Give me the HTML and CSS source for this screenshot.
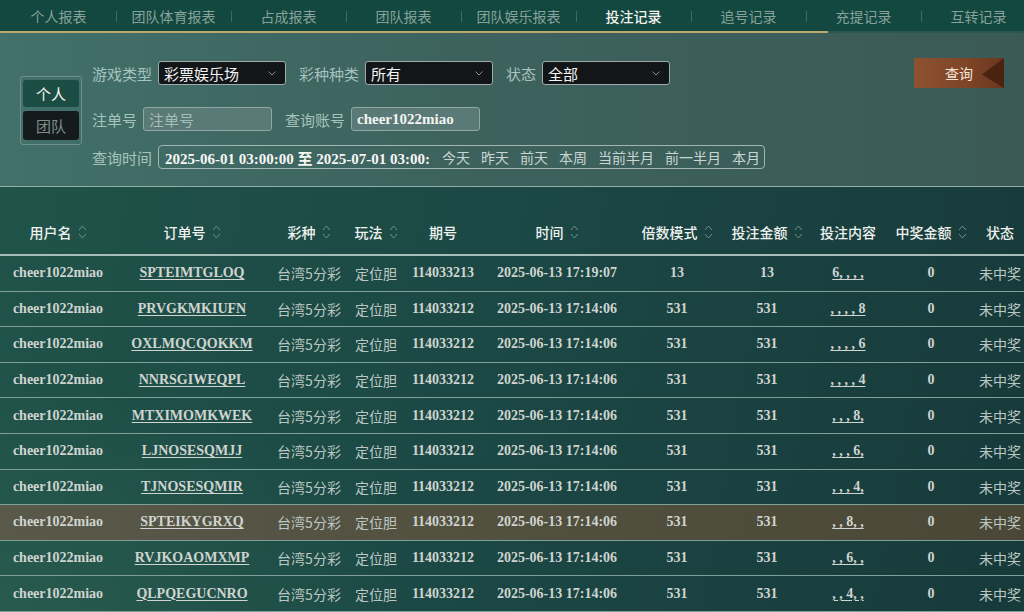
FILE: index.html
```html
<!DOCTYPE html>
<html lang="zh-CN">
<head>
<meta charset="utf-8">
<title>投注记录</title>
<link rel="stylesheet" href="styles.css">
</head>
<body>
<div class="page">
  <nav class="tabs">
    <div class="tab">个人报表</div>
    <div class="tab sep">团队体育报表</div>
    <div class="tab sep">占成报表</div>
    <div class="tab sep">团队报表</div>
    <div class="tab sep">团队娱乐报表</div>
    <div class="tab sep active">投注记录</div>
    <div class="tab sep">追号记录</div>
    <div class="tab sep">充提记录</div>
    <div class="tab sep">互转记录</div>
  </nav>
  <div class="tabline"><div class="tabline-gold"></div></div>

  <section class="filters">
    <div class="scope">
      <div class="scope-btn on">个人</div>
      <div class="scope-btn off">团队</div>
    </div>
    <div class="form">
      <div class="frow r1">
        <label class="lbl">游戏类型</label>
        <div class="select"><span>彩票娱乐场</span><svg class="chev" width="8" height="5" viewBox="0 0 8 5"><path d="M0.5 0.5 L4 4 L7.5 0.5" fill="none" stroke="#8a8f92" stroke-width="1"/></svg></div>
        <label class="lbl gap">彩种种类</label>
        <div class="select"><span>所有</span><svg class="chev" width="8" height="5" viewBox="0 0 8 5"><path d="M0.5 0.5 L4 4 L7.5 0.5" fill="none" stroke="#8a8f92" stroke-width="1"/></svg></div>
        <label class="lbl gap">状态</label>
        <div class="select"><span>全部</span><svg class="chev" width="8" height="5" viewBox="0 0 8 5"><path d="M0.5 0.5 L4 4 L7.5 0.5" fill="none" stroke="#8a8f92" stroke-width="1"/></svg></div>
      </div>
      <div class="frow r2">
        <label class="lbl">注单号</label>
        <div class="input placeholder">注单号</div>
        <label class="lbl gap">查询账号</label>
        <div class="input value">cheer1022miao</div>
      </div>
      <div class="frow r3">
        <label class="lbl">查询时间</label>
        <div class="daterange">
          <span class="dates">2025-06-01 03:00:00 至 2025-07-01 03:00:00</span>
          <span class="quick">今天</span>
          <span class="quick">昨天</span>
          <span class="quick">前天</span>
          <span class="quick">本周</span>
          <span class="quick">当前半月</span>
          <span class="quick">前一半月</span>
          <span class="quick">本月</span>
        </div>
      </div>
    </div>
    <div class="search-btn">查询</div>
  </section>

  <section class="table">
    <div class="thead">
      <div class="th">用户名<svg class="sort" width="9" height="16" viewBox="0 0 9 16"><path d="M1 6 L4.5 2 L8 6 M1 10 L4.5 14 L8 10" fill="none" stroke="#6f908a" stroke-width="1"/></svg></div>
      <div class="th">订单号<svg class="sort" width="9" height="16" viewBox="0 0 9 16"><path d="M1 6 L4.5 2 L8 6 M1 10 L4.5 14 L8 10" fill="none" stroke="#6f908a" stroke-width="1"/></svg></div>
      <div class="th">彩种<svg class="sort" width="9" height="16" viewBox="0 0 9 16"><path d="M1 6 L4.5 2 L8 6 M1 10 L4.5 14 L8 10" fill="none" stroke="#6f908a" stroke-width="1"/></svg></div>
      <div class="th">玩法<svg class="sort" width="9" height="16" viewBox="0 0 9 16"><path d="M1 6 L4.5 2 L8 6 M1 10 L4.5 14 L8 10" fill="none" stroke="#6f908a" stroke-width="1"/></svg></div>
      <div class="th">期号</div>
      <div class="th">时间<svg class="sort" width="9" height="16" viewBox="0 0 9 16"><path d="M1 6 L4.5 2 L8 6 M1 10 L4.5 14 L8 10" fill="none" stroke="#6f908a" stroke-width="1"/></svg></div>
      <div class="th">倍数模式<svg class="sort" width="9" height="16" viewBox="0 0 9 16"><path d="M1 6 L4.5 2 L8 6 M1 10 L4.5 14 L8 10" fill="none" stroke="#6f908a" stroke-width="1"/></svg></div>
      <div class="th">投注金额<svg class="sort" width="9" height="16" viewBox="0 0 9 16"><path d="M1 6 L4.5 2 L8 6 M1 10 L4.5 14 L8 10" fill="none" stroke="#6f908a" stroke-width="1"/></svg></div>
      <div class="th">投注内容</div>
      <div class="th">中奖金额<svg class="sort" width="9" height="16" viewBox="0 0 9 16"><path d="M1 6 L4.5 2 L8 6 M1 10 L4.5 14 L8 10" fill="none" stroke="#6f908a" stroke-width="1"/></svg></div>
      <div class="th">状态</div>
    </div>

    <div class="tr">
      <div class="td num">cheer1022miao</div><div class="td num link">SPTEIMTGLOQ</div><div class="td cn">台湾5分彩</div><div class="td cn">定位胆</div><div class="td num">114033213</div><div class="td num">2025-06-13 17:19:07</div><div class="td num">13</div><div class="td num">13</div><div class="td num link bet">6, , , ,</div><div class="td num">0</div><div class="td cn">未中奖</div>
    </div>
    <div class="tr">
      <div class="td num">cheer1022miao</div><div class="td num link">PRVGKMKIUFN</div><div class="td cn">台湾5分彩</div><div class="td cn">定位胆</div><div class="td num">114033212</div><div class="td num">2025-06-13 17:14:06</div><div class="td num">531</div><div class="td num">531</div><div class="td num link bet">, , , , 8</div><div class="td num">0</div><div class="td cn">未中奖</div>
    </div>
    <div class="tr">
      <div class="td num">cheer1022miao</div><div class="td num link">OXLMQCQOKKM</div><div class="td cn">台湾5分彩</div><div class="td cn">定位胆</div><div class="td num">114033212</div><div class="td num">2025-06-13 17:14:06</div><div class="td num">531</div><div class="td num">531</div><div class="td num link bet">, , , , 6</div><div class="td num">0</div><div class="td cn">未中奖</div>
    </div>
    <div class="tr">
      <div class="td num">cheer1022miao</div><div class="td num link">NNRSGIWEQPL</div><div class="td cn">台湾5分彩</div><div class="td cn">定位胆</div><div class="td num">114033212</div><div class="td num">2025-06-13 17:14:06</div><div class="td num">531</div><div class="td num">531</div><div class="td num link bet">, , , , 4</div><div class="td num">0</div><div class="td cn">未中奖</div>
    </div>
    <div class="tr">
      <div class="td num">cheer1022miao</div><div class="td num link">MTXIMOMKWEK</div><div class="td cn">台湾5分彩</div><div class="td cn">定位胆</div><div class="td num">114033212</div><div class="td num">2025-06-13 17:14:06</div><div class="td num">531</div><div class="td num">531</div><div class="td num link bet">, , , 8,</div><div class="td num">0</div><div class="td cn">未中奖</div>
    </div>
    <div class="tr">
      <div class="td num">cheer1022miao</div><div class="td num link">LJNOSESQMJJ</div><div class="td cn">台湾5分彩</div><div class="td cn">定位胆</div><div class="td num">114033212</div><div class="td num">2025-06-13 17:14:06</div><div class="td num">531</div><div class="td num">531</div><div class="td num link bet">, , , 6,</div><div class="td num">0</div><div class="td cn">未中奖</div>
    </div>
    <div class="tr">
      <div class="td num">cheer1022miao</div><div class="td num link">TJNOSESQMIR</div><div class="td cn">台湾5分彩</div><div class="td cn">定位胆</div><div class="td num">114033212</div><div class="td num">2025-06-13 17:14:06</div><div class="td num">531</div><div class="td num">531</div><div class="td num link bet">, , , 4,</div><div class="td num">0</div><div class="td cn">未中奖</div>
    </div>
    <div class="tr hover">
      <div class="td num">cheer1022miao</div><div class="td num link">SPTEIKYGRXQ</div><div class="td cn">台湾5分彩</div><div class="td cn">定位胆</div><div class="td num">114033212</div><div class="td num">2025-06-13 17:14:06</div><div class="td num">531</div><div class="td num">531</div><div class="td num link bet">, , 8, ,</div><div class="td num">0</div><div class="td cn">未中奖</div>
    </div>
    <div class="tr">
      <div class="td num">cheer1022miao</div><div class="td num link">RVJKOAOMXMP</div><div class="td cn">台湾5分彩</div><div class="td cn">定位胆</div><div class="td num">114033212</div><div class="td num">2025-06-13 17:14:06</div><div class="td num">531</div><div class="td num">531</div><div class="td num link bet">, , 6, ,</div><div class="td num">0</div><div class="td cn">未中奖</div>
    </div>
    <div class="tr">
      <div class="td num">cheer1022miao</div><div class="td num link">QLPQEGUCNRO</div><div class="td cn">台湾5分彩</div><div class="td cn">定位胆</div><div class="td num">114033212</div><div class="td num">2025-06-13 17:14:06</div><div class="td num">531</div><div class="td num">531</div><div class="td num link bet">, , 4, ,</div><div class="td num">0</div><div class="td cn">未中奖</div>
    </div>
  </section>
</div>
</body>
</html>
```

FILE: styles.css
```css
* { box-sizing: border-box; }
html, body {
  margin: 0;
  padding: 0;
  width: 1024px;
  height: 612px;
  overflow: hidden;
  background: #1b4744;
  font-family: "Noto Sans CJK SC", "Noto Sans", sans-serif;
  font-size: 14px;
}
.page {
  width: 1024px;
  height: 612px;
  overflow: hidden;
}

/* ---------- tabs ---------- */
.tabs {
  display: flex;
  height: 31px;
  padding-left: 1px;
  background: #134840;
  overflow: hidden;
}
.tab {
  flex: 0 0 115px;
  position: relative;
  display: flex;
  align-items: center;
  justify-content: center;
  color: #86a29a;
  font-size: 14px;
  line-height: 1;
}
.tab.sep::before {
  content: "";
  position: absolute;
  left: 0;
  top: 11px;
  width: 1px;
  height: 11px;
  background: #47685f;
}
.tab.active {
  color: #f2f2ee;
  font-weight: 500;
}
.tabline {
  height: 2px;
  background: #2b5750;
}
.tabline-gold {
  width: 828px;
  height: 2px;
  background: #bda66c;
}

/* ---------- filters ---------- */
.filters {
  display: flex;
  align-items: center;
  height: 154px;
  padding: 0 20px;
  background: linear-gradient(90deg, #42706a 0%, #3d625e 45%, #3b5a57 100%);
  border-bottom: 1px solid #94aeaa;
}
.scope {
  width: 62px;
  height: 69px;
  border: 1px solid #6f908a;
  border-radius: 3px;
  padding: 3px 2px;
  display: flex;
  flex-direction: column;
  gap: 4px;
  margin-top: 1px;
}
.scope-btn {
  border-radius: 3px;
  display: flex;
  align-items: center;
  justify-content: center;
  font-size: 15px;
}
.scope-btn.on { background: #1b4d44; color: #f4f4f0; height: 27px; }
.scope-btn.off { background: #151b1d; color: #7f8e8c; height: 29px; }

.form {
  margin-left: 10px;
  padding-top: 28px;
  padding-bottom: 17px;
  display: flex;
  flex-direction: column;
}
.frow {
  display: flex;
  align-items: center;
  height: 24px;
}
.r2 { margin-top: 22px; }
.r3 { margin-top: 14px; }
.lbl {
  color: #a7c3be;
  font-size: 15px;
  margin-right: 6px;
  white-space: nowrap;
}
.lbl.gap { margin-left: 13px; }
.select {
  width: 128px;
  height: 24px;
  background: #131619;
  border: 1px solid #a2abab;
  border-radius: 3px;
  display: flex;
  align-items: center;
  justify-content: space-between;
  padding: 0 9px 0 5px;
  color: #f4f4f4;
  font-size: 15px;
}
.chev { display: block; }
.input {
  width: 129px;
  height: 24px;
  background: #5a7a77;
  border: 1px solid #8fa8a4;
  border-radius: 3px;
  display: flex;
  align-items: center;
  padding: 0 5px;
  font-size: 15px;
}
.input.placeholder { color: #a6bcb8; }
.input.value {
  color: #f4f4f2;
  font-family: "Liberation Serif", serif;
  font-weight: bold;
  font-size: 15px;
}
.daterange {
  width: 607px;
  height: 24px;
  border: 1px solid #a2b6b2;
  border-radius: 4px;
  display: flex;
  align-items: center;
  padding-left: 6px;
  overflow: hidden;
}
.dates {
  flex: 0 0 265px;
  overflow: hidden;
  white-space: nowrap;
  color: #f6f6f4;
  font-family: "Liberation Serif", "Noto Sans CJK SC", serif;
  font-weight: bold;
  font-size: 15px;
}
.quick {
  color: #c9d6d3;
  font-size: 14px;
  margin-left: 11px;
  white-space: nowrap;
}
.dates + .quick { margin-left: 12px; }

.search-btn {
  margin-left: auto;
  align-self: flex-start;
  margin-top: 25px;
  width: 90px;
  height: 30px;
  position: relative;
  background: linear-gradient(90deg, #8e5231 0%, #7e4427 60%, #6a3520 100%);
  color: #f5e6d8;
  font-size: 14px;
  display: flex;
  align-items: center;
  justify-content: center;
  overflow: hidden;
}
.search-btn::after {
  content: "";
  position: absolute;
  right: 0;
  top: 0;
  width: 22px;
  height: 30px;
  background: #4a2210;
  clip-path: polygon(100% 0, 100% 100%, 0 55%);
}

/* ---------- table ---------- */
.table {
  height: 457px;
  padding-top: 18px;
  background:
    radial-gradient(ellipse 420px 260px at 0% 100%, rgba(60,110,90,0.35), rgba(60,110,90,0) 100%),
    linear-gradient(100deg, #205349 0%, #1b4744 50%, #173a3a 100%);
}
.thead, .tr {
  display: grid;
  grid-template-columns: 116px 152px 82px 52px 82px 146px 94px 86px 76px 90px 48px;
}
.thead {
  height: 51px;
  border-bottom: 2px solid #a6bdb9;
  align-items: center;
  padding-top: 4px;
}
.th {
  display: flex;
  align-items: center;
  justify-content: center;
  color: #eef1ee;
  font-size: 14px;
  font-weight: 500;
  white-space: nowrap;
}
.sort { margin-left: 6px; display: block; }
.tr {
  height: 35.6px;
  border-bottom: 1px solid #7f9f9a;
  align-items: center;
}
.tr.hover {
  background: linear-gradient(90deg, #59594a 0%, #504e3c 60%, #4a4736 100%);
}
.td {
  text-align: center;
  white-space: nowrap;
  overflow: hidden;
  color: #cfd4d0;
}
.td.num {
  font-family: "Liberation Serif", serif;
  font-weight: bold;
  font-size: 14px;
}
.td.cn {
  font-size: 14px;
  color: #bcc7c3;
}
.td.link { text-decoration: underline; text-underline-offset: 2px; }
.td.bet { white-space: pre; }
```
